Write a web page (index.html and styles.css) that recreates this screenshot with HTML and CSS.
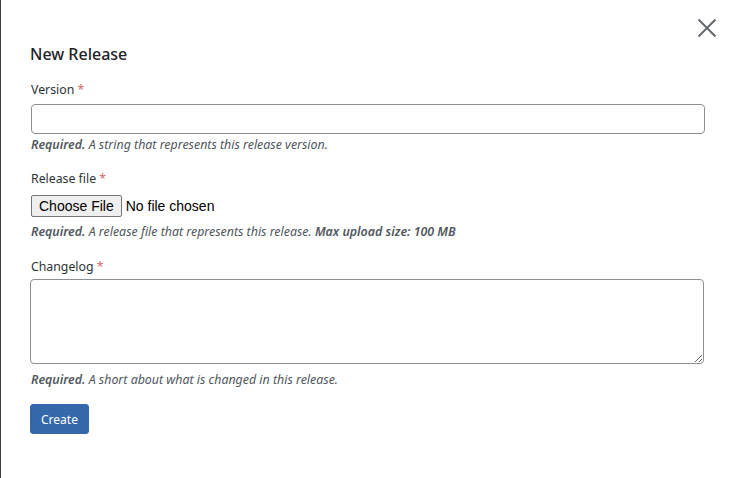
FILE: index.html
```html
<!DOCTYPE html>
<html lang="en">
<head>
  <meta charset="UTF-8">
  <title>New Release</title>
  <link rel="stylesheet" href="styles.css">
</head>
<body>
  <div class="modal">
    <button class="close" aria-label="Close">
      <svg width="20" height="20" viewBox="0 0 20 20">
        <path d="M1.5 1.5 L18.5 18.5 M18.5 1.5 L1.5 18.5" stroke="#646970" stroke-width="2" fill="none"/>
      </svg>
    </button>

    <h1>New Release</h1>

    <form class="release-form">
      <label class="field-label" for="version">Version <span class="req">*</span></label>
      <input type="text" id="version" class="text-input">
      <p class="help"><b>Required.</b> A string that represents this release version.</p>

      <label class="field-label label-file" for="file">Release file <span class="req">*</span></label>
      <input type="file" id="file" class="file-input">
      <p class="help help-file"><b>Required.</b> A release file that represents this release. <b>Max upload size: 100 MB</b></p>

      <label class="field-label label-log" for="changelog">Changelog <span class="req">*</span></label>
      <textarea id="changelog" class="text-area"></textarea>
      <p class="help help-log"><b>Required.</b> A short about what is changed in this release.</p>

      <button type="button" class="create">Create</button>
    </form>
  </div>
</body>
</html>
```

FILE: styles.css
```css
html, body {
  height: 100%;
}
body {
  margin: 0;
  background: #fff;
  font-family: "Noto Sans", "Open Sans", sans-serif;
  color: #1d2327;
  border-left: 1px solid #3c3c3c;
  box-sizing: border-box;
}
.modal {
  position: relative;
  padding: 43px 28px 0 29px;
}
.close {
  position: absolute;
  top: 18px;
  right: 16px;
  width: 20px;
  height: 20px;
  padding: 0;
  border: none;
  background: none;
}
.close svg {
  display: block;
}
h1 {
  margin: 0;
  font-size: 16px;
  line-height: 22px;
  font-weight: 500;
  color: #1d2327;
}
.release-form {
  display: flex;
  flex-direction: column;
  align-items: flex-start;
}
.field-label {
  margin-top: 16px;
  margin-left: 1px;
  font-size: 12.3px;
  line-height: 18px;
  color: #2c3338;
}
.label-file {
  margin-top: 17px;
}
.label-log {
  margin-top: 18px;
}
.req {
  color: #d66a6a;
}
.text-input {
  box-sizing: border-box;
  width: 674px;
  height: 30px;
  margin: 5px 0 0 1px;
  border: 1px solid #8c8f94;
  border-radius: 4px;
  background: #fff;
}
.file-input {
  margin: 7px 0 0 1px;
  font-family: "Liberation Sans", Arial, sans-serif;
  font-size: 14px;
  color: #000;
}
.file-input::file-selector-button {
  height: 22px;
  font-family: "Liberation Sans", Arial, sans-serif;
  font-size: 14px;
  padding: 0 7px;
  margin-right: 4px;
  border: 1px solid #767676;
  border-radius: 2px;
  background: #efefef;
  color: #000;
}
.text-area {
  box-sizing: border-box;
  width: 674px;
  height: 85px;
  margin-top: 3px;
  border: 1px solid #8c8f94;
  border-radius: 4px;
  resize: both;
}
.help {
  margin: 3px 0 0 1px;
  font-size: 12.4px;
  line-height: 16px;
  font-style: italic;
  color: #50575e;
}
.help b {
  font-weight: 600;
}
.help-file {
  margin-top: 7px;
}
.help-log {
  margin-top: 8px;
}
.create {
  margin-top: 16px;
  height: 30px;
  padding: 0 10px;
  border: 1px solid #3468aa;
  border-radius: 3px;
  background: #3468aa;
  color: #fff;
  font-family: "Noto Sans", "Open Sans", sans-serif;
  font-size: 12px;
}
```
